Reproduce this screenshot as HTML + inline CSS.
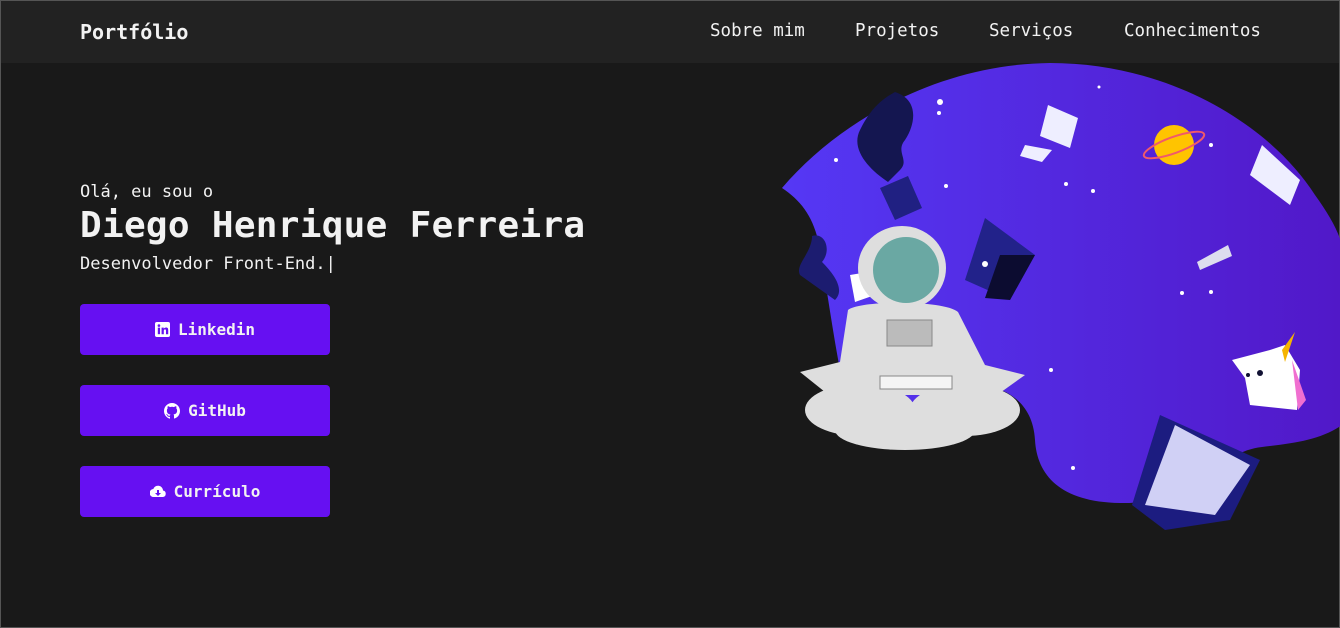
<!DOCTYPE html>
<html><head><meta charset="utf-8"><style>
*{margin:0;padding:0;box-sizing:border-box}
body{width:1340px;height:628px;background:#191919;font-family:"DejaVu Sans Mono","Liberation Mono",monospace;color:#f2f2f2;overflow:hidden;position:relative;border:1px solid #555}
header{height:62px;background:#222;position:absolute;left:0;top:0;width:100%}
.logo{position:absolute;left:79px;top:19px;font-size:20px;font-weight:bold}
nav span{position:absolute;top:20px;font-size:17.5px}
.hi{position:absolute;left:79px;top:181px;font-size:17px}
h1{position:absolute;left:79px;top:204px;font-size:36px;font-weight:bold;letter-spacing:0.3px}
.role{position:absolute;left:79px;top:253px;font-size:17px}
.btn{position:absolute;left:79px;width:250px;height:51px;background:#6610f2;border-radius:4px;display:flex;align-items:center;justify-content:center;font-weight:bold;font-size:16px;gap:8px}
svg.art{position:absolute;left:-1px;top:-1px}
</style></head><body>
<header><div class="logo">Portfólio</div><nav><span style="left:709px">Sobre mim</span><span style="left:854px">Projetos</span><span style="left:988px">Serviços</span><span style="left:1123px">Conhecimentos</span></nav></header>
<div class="hi">Olá, eu sou o</div>
<h1>Diego Henrique Ferreira</h1>
<div class="role">Desenvolvedor Front-End.|</div>
<div class="btn" style="top:303px"><svg width="15" height="15" viewBox="0 0 16 16"><rect width="16" height="16" rx="2" fill="#fff"/><rect x="3" y="6" width="2.4" height="7" fill="#6610f2"/><circle cx="4.2" cy="3.8" r="1.4" fill="#6610f2"/><path d="M7 6h2.3v1.2c.5-.9 1.4-1.4 2.5-1.4 2 0 2.3 1.3 2.3 3V13h-2.4V9.4c0-.9-.1-1.6-1-1.6s-1.3.7-1.3 1.6V13H7z" fill="#6610f2"/></svg>Linkedin</div>
<div class="btn" style="top:384px"><svg width="16" height="16" viewBox="0 0 16 16"><path fill="#fff" d="M8 0C3.6 0 0 3.6 0 8c0 3.5 2.3 6.5 5.5 7.6.4.1.5-.2.5-.4v-1.4c-2.2.5-2.7-1-2.7-1-.4-.9-.9-1.2-.9-1.2-.7-.5.1-.5.1-.5.8.1 1.2.8 1.2.8.7 1.3 1.9.9 2.3.7.1-.5.3-.9.5-1.1-1.8-.2-3.6-.9-3.6-4 0-.9.3-1.6.8-2.1-.1-.2-.4-1 .1-2.1 0 0 .7-.2 2.2.8.6-.2 1.3-.3 2-.3s1.4.1 2 .3c1.5-1 2.2-.8 2.2-.8.4 1.1.2 1.9.1 2.1.5.6.8 1.3.8 2.1 0 3.1-1.9 3.7-3.6 3.9.3.3.5.8.5 1.5v2.2c0 .2.1.5.6.4C13.7 14.5 16 11.5 16 8c0-4.4-3.6-8-8-8z"/></svg>GitHub</div>
<div class="btn" style="top:465px"><svg width="16" height="14" viewBox="0 0 16 14"><path fill="#fff" d="M13 5.5A5 5 0 0 0 3.3 4 4 4 0 0 0 4 12h9a3.3 3.3 0 0 0 0-6.5z"/><path fill="#6610f2" d="M7 5h2v3h2l-3 3-3-3h2z"/></svg>Currículo</div>
<svg class="art" width="1340" height="628">
<defs><linearGradient id="g" x1="0" x2="1"><stop offset="0" stop-color="#5538f5"/><stop offset="1" stop-color="#5118c8"/></linearGradient></defs>
<path fill="url(#g)" d="M782,188 C840,120 940,64 1050,63 C1170,63 1270,125 1315,195 C1328,213 1338,230 1342,245 L1342,425 C1320,440 1295,443 1262,447 C1215,452 1195,505 1120,503 C1060,502 1037,475 1035,440 C1033,405 1010,390 985,385 L860,440 C840,400 830,300 818,240 C812,215 800,200 782,188Z"/>
<path d="M895,92 C920,100 915,125 905,140 C895,152 910,160 900,170 L888,182 C870,170 850,150 860,130 C870,110 880,100 895,92Z" fill="#141650"/>
<path d="M880,188 L908,176 L922,208 L895,220Z" fill="#202082"/>
<path d="M985,218 L1035,255 L1010,300 L965,280Z" fill="#22228a"/><path d="M1000,255 L1035,255 L1010,300 L985,298Z" fill="#0c0c30"/>
<circle cx="1174" cy="145" r="20" fill="#ffc400"/><ellipse cx="1174" cy="145" rx="32" ry="8" fill="none" stroke="#f05a6a" stroke-width="2" transform="rotate(-20 1174 145)"/>
<path d="M1048,105 L1078,118 L1070,148 L1040,136Z M1025,145 L1052,150 L1042,162 L1020,156Z" fill="#eef"/>
<path d="M1262,145 L1300,180 L1290,205 L1250,175Z" fill="#eef"/>
<path d="M1197,262 L1228,245 L1232,256 L1200,270Z" fill="#dde"/>
<path d="M1232,360 L1270,350 L1285,345 L1300,370 L1297,410 L1250,405 L1245,378Z" fill="#fff"/><path d="M1282,350 L1295,332 L1285,362Z" fill="#f5b400"/><path d="M1292,360 L1306,400 L1298,410Z" fill="#f06fd0"/>
<circle cx="1248" cy="375" r="2" fill="#113"/><circle cx="1260" cy="373" r="3" fill="#113"/>
<path d="M1160,415 L1260,460 L1230,520 L1165,530 L1132,505Z" fill="#1c1c80"/><path d="M1175,425 L1250,465 L1215,515 L1145,505Z" fill="#d0d0f5"/>
<path d="M812,236 C825,232 832,250 822,262 C835,275 845,290 835,300 L800,275 C795,265 810,255 812,238Z" fill="#1c1c70"/>
<path d="M850,275 L868,272 L875,295 L855,302Z" fill="#fff"/>
<g fill="#dedede">
<path d="M848,310 C860,300 945,300 958,312 L985,365 L1025,375 L990,400 L945,395 L880,395 L835,400 L800,372 L840,362Z"/>
<ellipse cx="902" cy="268" rx="44" ry="42"/>
<ellipse cx="860" cy="410" rx="55" ry="26"/><ellipse cx="965" cy="410" rx="55" ry="26"/><ellipse cx="905" cy="430" rx="70" ry="20"/>
</g>
<ellipse cx="906" cy="270" rx="33" ry="33" fill="#6aa8a3"/>
<rect x="880" y="376" width="72" height="13" fill="#f4f4f4" stroke="#888"/>
<rect x="887" y="320" width="45" height="26" fill="#bbb" stroke="#888"/>
<g fill="#fff"><circle cx="940" cy="102" r="3"/><circle cx="939" cy="113" r="2"/><circle cx="836" cy="160" r="2"/><circle cx="946" cy="186" r="2"/><circle cx="1066" cy="184" r="2"/><circle cx="1093" cy="191" r="2"/><circle cx="1099" cy="87" r="1.5"/><circle cx="1182" cy="293" r="2"/><circle cx="1051" cy="370" r="2"/><circle cx="1073" cy="468" r="2"/><circle cx="1211" cy="292" r="2"/><circle cx="1211" cy="145" r="2"/><circle cx="985" cy="264" r="3"/></g>
</svg>
</body></html>
